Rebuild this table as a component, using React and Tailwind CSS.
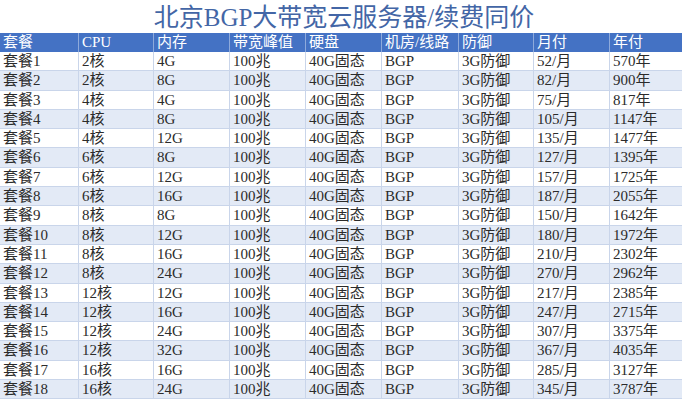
import React from "react";

const headers = ["套餐", "CPU", "内存", "带宽峰值", "硬盘", "机房/线路", "防御", "月付", "年付"];

// cpu, ram, monthly, yearly
const plans = [
  [2, 4, 52, 570],
  [2, 8, 82, 900],
  [4, 4, 75, 817],
  [4, 8, 105, 1147],
  [4, 12, 135, 1477],
  [6, 8, 127, 1395],
  [6, 12, 157, 1725],
  [6, 16, 187, 2055],
  [8, 8, 150, 1642],
  [8, 12, 180, 1972],
  [8, 16, 210, 2302],
  [8, 24, 270, 2962],
  [12, 12, 217, 2385],
  [12, 16, 247, 2715],
  [12, 24, 307, 3375],
  [12, 32, 367, 4035],
  [16, 16, 285, 3127],
  [16, 24, 345, 3787],
];

const font = { fontFamily: '"Liberation Serif", "Noto Sans CJK SC", serif' };

const cols = "grid grid-cols-[78px_75px_76px_76px_76px_77px_75px_76px_73px]";

export default function App() {
  return (
    <div className="w-[686px] h-[400px] bg-white overflow-hidden" style={font}>
      {/* title */}
      <div className="h-[33px] flex items-end justify-center pl-[2px]">
        <h1 className="text-[25px] leading-[30px] text-[#4366a6]">
          北京BGP大带宽云服务器/续费同价
        </h1>
      </div>

      <div className="w-[682px]">
        {/* header row */}
        <div className={`${cols} h-[19px] bg-[#4472c4]`}>
          {headers.map((h, i) => (
            <div
              key={h}
              className={`px-[3px] text-[15px] leading-[19px] text-white ${
                i > 0 ? "border-l border-[#8eaadb]" : ""
              }`}
            >
              {h}
            </div>
          ))}
        </div>

        {/* rows */}
        {plans.map(([cpu, ram, mo, yr], r) => {
          const cells = [
            `套餐${r + 1}`,
            `${cpu}核`,
            `${ram}G`,
            "100兆",
            "40G固态",
            "BGP",
            "3G防御",
            `${mo}/月`,
            `${yr}年`,
          ];
          return (
            <div
              key={r}
              className={`${cols} h-[19.3px] border-b border-[#c9d5ea] ${
                r % 2 === 1 ? "bg-[#e3eaf6]" : "bg-white"
              }`}
            >
              {cells.map((c, i) => (
                <div
                  key={i}
                  className={`px-[3px] text-[15px] leading-[19px] text-[#2b2b2b] whitespace-nowrap ${
                    i > 0 ? "border-l border-[#c9d5ea]" : ""
                  }`}
                >
                  {c}
                </div>
              ))}
            </div>
          );
        })}
      </div>
    </div>
  );
}
